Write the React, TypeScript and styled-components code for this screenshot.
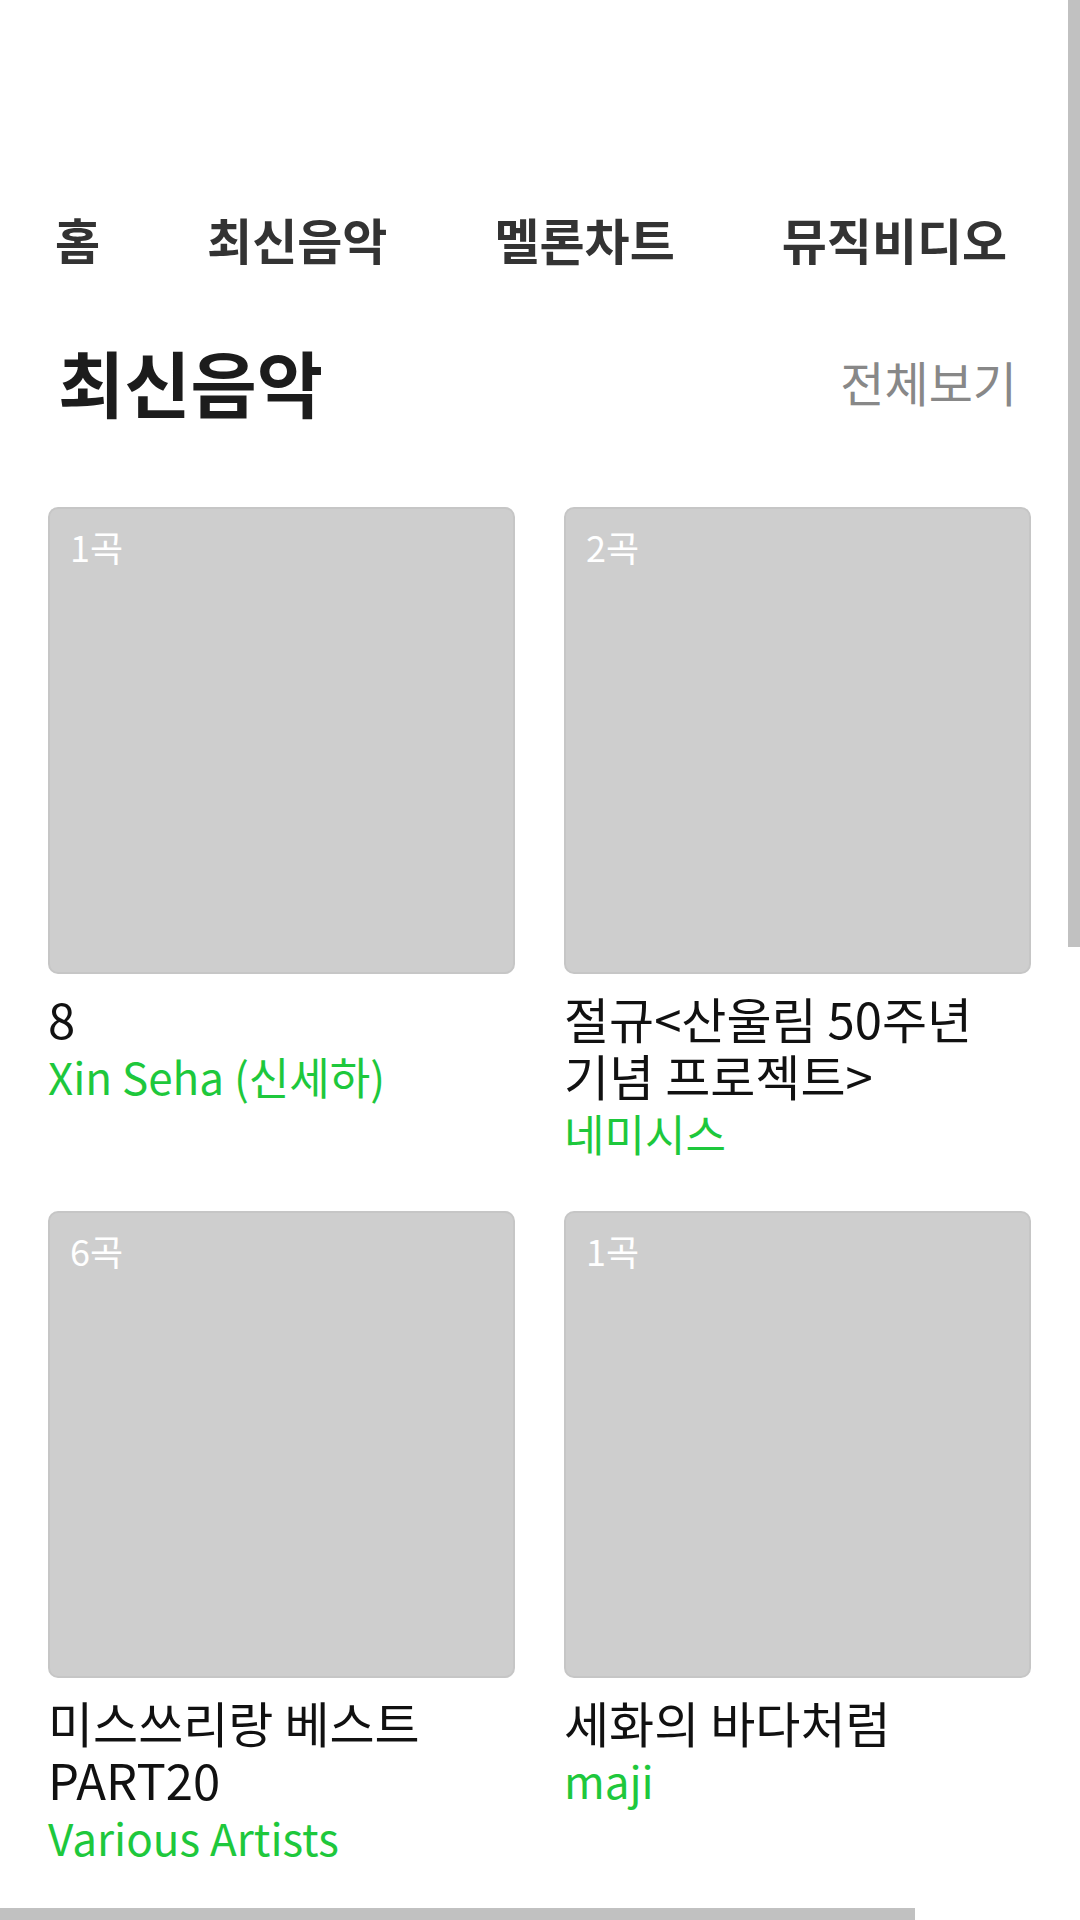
import React from 'react';
import styled, { createGlobalStyle } from 'styled-components';

const GlobalStyle = createGlobalStyle`
  html, body {
    margin: 0;
    padding: 0;
    background: #ffffff;
  }
  body {
    font-family: "Noto Sans CJK KR", "Noto Sans", sans-serif;
    color: #111111;
    overflow-x: hidden;
  }
`;

const Page = styled.div`
  padding-top: 205px;
  padding-bottom: 60px;
`;

const Nav = styled.nav`
  display: flex;
  gap: 107px;
  padding-left: 55px;
  white-space: nowrap;
`;

const NavItem = styled.a`
  font-size: 49px;
  font-weight: 700;
  line-height: 68px;
  color: #333333;
  text-decoration: none;
  flex-shrink: 0;
`;

const SectionHeader = styled.div`
  display: flex;
  justify-content: space-between;
  align-items: center;
  padding: 0 63px 0 58px;
  margin-top: 63px;
`;

const SectionTitle = styled.h2`
  margin: 0;
  font-size: 72px;
  font-weight: 700;
  line-height: 90px;
  color: #1c1c1c;
`;

const MoreLink = styled.a`
  font-size: 48px;
  font-weight: 400;
  color: #888888;
  text-decoration: none;
`;

const AlbumGrid = styled.div`
  display: grid;
  grid-template-columns: 1fr 1fr;
  gap: 48px 49px;
  padding: 0 49px 0 48px;
  margin-top: 81px;
`;

const AlbumItem = styled.div`
  display: flex;
  flex-direction: column;
  min-width: 0;
`;

const Cover = styled.div`
  aspect-ratio: 1 / 1;
  box-sizing: border-box;
  background: #cecece;
  border: 2px solid #c6c6c6;
  border-radius: 10px;
  padding: 17px 20px;
`;

const TrackCount = styled.span`
  font-size: 36px;
  line-height: 40px;
  color: #ffffff;
`;

const AlbumTitle = styled.div`
  margin-top: 15px;
  font-size: 49px;
  line-height: 57px;
  color: #111111;
  word-break: keep-all;
`;

const Artist = styled.div`
  font-size: 44px;
  line-height: 60px;
  color: #1ec83c;
`;

// overlay scroll indicators, as the page shows them over its content
const VerticalThumb = styled.div`
  position: fixed;
  top: 0;
  right: 0;
  width: 12px;
  height: 947px;
  background: #c1c1c1;
`;

const HorizontalThumb = styled.div`
  position: fixed;
  left: 0;
  bottom: 0;
  width: 915px;
  height: 12px;
  background: #c1c1c1;
`;

const menus = ['홈', '최신음악', '멜론차트', '뮤직비디오'];

const albums = [
  { count: 1, title: '8', artist: 'Xin Seha (신세하)' },
  { count: 2, title: '절규<산울림 50주년 기념 프로젝트>', artist: '네미시스' },
  { count: 6, title: '미스쓰리랑 베스트 PART20', artist: 'Various Artists' },
  { count: 1, title: '세화의 바다처럼', artist: 'maji' },
];

export default function App() {
  return (
    <>
      <GlobalStyle />
      <Page>
        <Nav>
          {menus.map(menu => (
            <NavItem key={menu} href="#">
              {menu}
            </NavItem>
          ))}
        </Nav>
        <SectionHeader>
          <SectionTitle>최신음악</SectionTitle>
          <MoreLink href="#">전체보기</MoreLink>
        </SectionHeader>
        <AlbumGrid>
          {albums.map((album, i) => (
            <AlbumItem key={i}>
              <Cover>
                <TrackCount>{album.count}곡</TrackCount>
              </Cover>
              <AlbumTitle>{album.title}</AlbumTitle>
              <Artist>{album.artist}</Artist>
            </AlbumItem>
          ))}
        </AlbumGrid>
      </Page>
      <VerticalThumb />
      <HorizontalThumb />
    </>
  );
}
